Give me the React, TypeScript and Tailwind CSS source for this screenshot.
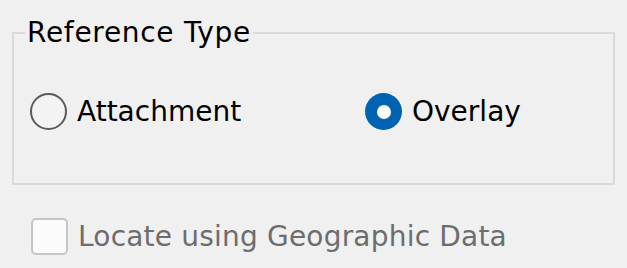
import React from "react";

const font = { fontFamily: '"DejaVu Sans", Verdana, sans-serif' };

function Radio({ checked, label }: { checked: boolean; label: string }) {
  return (
    <label className="flex items-center gap-[10px]">
      {checked ? (
        <span className="flex h-[37px] w-[37px] items-center justify-center rounded-full bg-[#0063b1]">
          <span className="h-[14px] w-[14px] rounded-full bg-white" />
        </span>
      ) : (
        <span className="h-[37px] w-[37px] rounded-full border-[2.5px] border-[#5b5b5b] bg-[#f3f3f3]" />
      )}
      <span className="text-[28px] leading-[32px] text-black">{label}</span>
    </label>
  );
}

export default function App() {
  return (
    <div
      className="h-[268px] w-[627px] overflow-hidden bg-[#f0f0f0] pt-[17px] pl-[12px]"
      style={font}
    >
      <fieldset className="m-0 w-[603px] border-2 border-[#dadada] pl-[16px] pr-[16px] pt-[44px] pb-[53px]">
        <legend className="-ml-[5px] px-[2px] text-[28px] leading-[32px] tracking-[0.7px] text-black">
          Reference Type
        </legend>
        <div className="flex">
          <div className="w-[335px]">
            <Radio checked={false} label="Attachment" />
          </div>
          <Radio checked={true} label="Overlay" />
        </div>
      </fieldset>
      <div className="mt-[33px] ml-[19px] flex items-center gap-[10px]">
        <span className="h-[37px] w-[37px] rounded-[5px] border-2 border-[#c6c6c6] bg-[#fbfbfb]" />
        <span className="text-[28px] leading-[32px] tracking-[0.2px] text-[#6d6d6d]">
          Locate using Geographic Data
        </span>
      </div>
    </div>
  );
}
